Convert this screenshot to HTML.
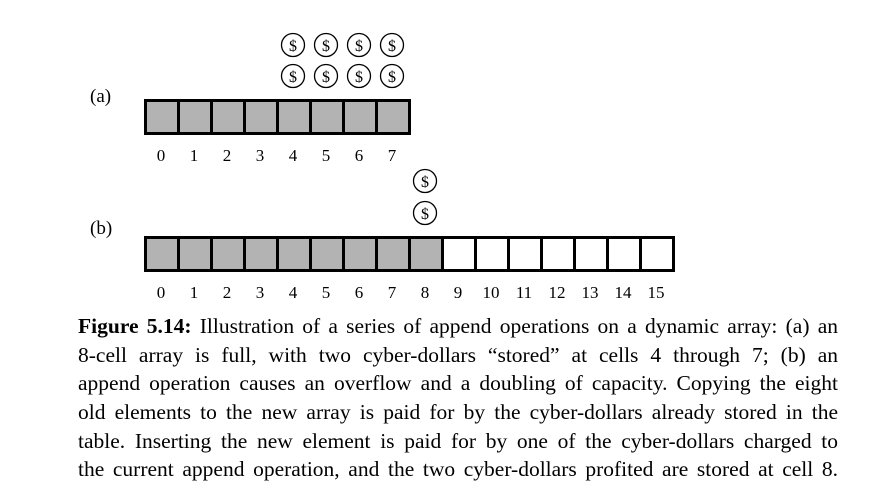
<!DOCTYPE html>
<html><head><style>
body{margin:0;background:#fff;width:880px;height:504px;overflow:hidden;position:relative;font-family:"Liberation Serif",serif;}
svg{position:absolute;left:0;top:0}
.cap{position:absolute;left:78px;top:312px;width:760px;font-size:21.5px;line-height:28.7px;color:#000}
.cap div{text-align:justify;text-align-last:justify;white-space:nowrap;height:28.7px}
</style></head><body>
<svg width="880" height="310" font-family="Liberation Serif, serif">
<text x="90" y="102" font-size="19">(a)</text>
<text x="90" y="234" font-size="19">(b)</text>
<g stroke="#000" stroke-width="3" fill="#b3b3b3">
<rect x="145.5" y="100.5" width="264" height="33"/>
<line x1="178.5" y1="100" x2="178.5" y2="134"/><line x1="211.5" y1="100" x2="211.5" y2="134"/>
<line x1="244.5" y1="100" x2="244.5" y2="134"/><line x1="277.5" y1="100" x2="277.5" y2="134"/>
<line x1="310.5" y1="100" x2="310.5" y2="134"/><line x1="343.5" y1="100" x2="343.5" y2="134"/>
<line x1="376.5" y1="100" x2="376.5" y2="134"/>
<rect x="145.5" y="237.5" width="297" height="33"/>
<rect x="442.5" y="237.5" width="231" height="33" fill="#fff"/>
<line x1="178.5" y1="237" x2="178.5" y2="271"/><line x1="211.5" y1="237" x2="211.5" y2="271"/>
<line x1="244.5" y1="237" x2="244.5" y2="271"/><line x1="277.5" y1="237" x2="277.5" y2="271"/>
<line x1="310.5" y1="237" x2="310.5" y2="271"/><line x1="343.5" y1="237" x2="343.5" y2="271"/>
<line x1="376.5" y1="237" x2="376.5" y2="271"/><line x1="409.5" y1="237" x2="409.5" y2="271"/>
<line x1="475.5" y1="237" x2="475.5" y2="271"/><line x1="508.5" y1="237" x2="508.5" y2="271"/>
<line x1="541.5" y1="237" x2="541.5" y2="271"/><line x1="574.5" y1="237" x2="574.5" y2="271"/>
<line x1="607.5" y1="237" x2="607.5" y2="271"/><line x1="640.5" y1="237" x2="640.5" y2="271"/>
</g>
<g stroke="#000" stroke-width="1.3" fill="#fff">
<circle cx="293" cy="45" r="11.5"/><circle cx="326" cy="45" r="11.5"/><circle cx="359" cy="45" r="11.5"/><circle cx="392" cy="45" r="11.5"/>
<circle cx="293" cy="76" r="11.5"/><circle cx="326" cy="76" r="11.5"/><circle cx="359" cy="76" r="11.5"/><circle cx="392" cy="76" r="11.5"/>
<circle cx="425" cy="181" r="11.5"/><circle cx="425" cy="213" r="11.5"/>
</g>
<g font-size="16" text-anchor="middle">
<text x="293" y="51">$</text><text x="326" y="51">$</text><text x="359" y="51">$</text><text x="392" y="51">$</text>
<text x="293" y="82">$</text><text x="326" y="82">$</text><text x="359" y="82">$</text><text x="392" y="82">$</text>
<text x="425" y="187">$</text><text x="425" y="219">$</text>
</g>
<g font-size="17" text-anchor="middle">
<text x="161" y="161">0</text><text x="194" y="161">1</text><text x="227" y="161">2</text><text x="260" y="161">3</text>
<text x="293" y="161">4</text><text x="326" y="161">5</text><text x="359" y="161">6</text><text x="392" y="161">7</text>
<text x="161" y="298">0</text><text x="194" y="298">1</text><text x="227" y="298">2</text><text x="260" y="298">3</text>
<text x="293" y="298">4</text><text x="326" y="298">5</text><text x="359" y="298">6</text><text x="392" y="298">7</text>
<text x="425" y="298">8</text><text x="458" y="298">9</text><text x="491" y="298">10</text><text x="524" y="298">11</text>
<text x="557" y="298">12</text><text x="590" y="298">13</text><text x="623" y="298">14</text><text x="656" y="298">15</text>
</g>
</svg>
<div class="cap">
<div><b>Figure 5.14:</b> Illustration of a series of append operations on a dynamic array: (a) an</div>
<div>8-cell array is full, with two cyber-dollars “stored” at cells 4 through 7; (b) an</div>
<div>append operation causes an overflow and a doubling of capacity. Copying the eight</div>
<div>old elements to the new array is paid for by the cyber-dollars already stored in the</div>
<div>table. Inserting the new element is paid for by one of the cyber-dollars charged to</div>
<div>the current append operation, and the two cyber-dollars profited are stored at cell 8.</div>
</div>
</body></html>
